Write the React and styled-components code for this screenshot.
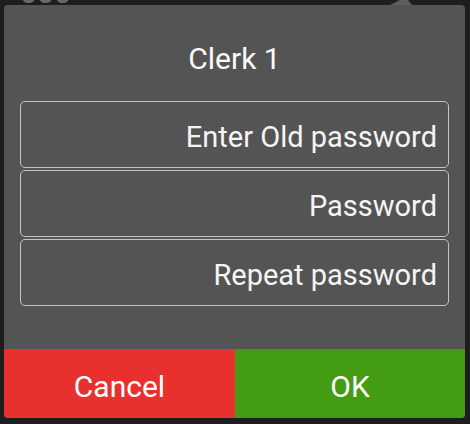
import React from "react";
import styled, { createGlobalStyle } from "styled-components";

const Global = createGlobalStyle`
  html, body { margin: 0; padding: 0; background: #1e1e1e; }
  body { font-family: Roboto, "Noto Sans", "Liberation Sans", sans-serif; }
  * { box-sizing: border-box; }
`;

const Screen = styled.div`
  position: relative;
  width: 470px;
  height: 424px;
  overflow: hidden;
  background: #1e1e1e;
`;

const Backdrop = styled.div`
  display: flex;
  align-items: flex-end;
  justify-content: space-between;
  height: 5px;
  padding: 0 56px 0 20px;
  overflow: hidden;
`;

const BackText = styled.span`
  font-size: 30px;
  line-height: 1;
  color: #6a6a6a;
  font-weight: 500;
  margin-bottom: -3px;
`;

const Dialog = styled.div`
  position: absolute;
  left: 4px;
  top: 5px;
  width: 461px;
  height: 413px;
  background: #555455;
  border-radius: 4px;
  overflow: hidden;
  display: flex;
  flex-direction: column;
`;

const Title = styled.h1`
  margin: 0;
  padding: 36px 0 0;
  height: 96px;
  text-align: center;
  font-size: 30px;
  font-weight: 400;
  color: #fafafa;
  line-height: 35px;
`;

const Fields = styled.div`
  display: flex;
  flex-direction: column;
  gap: 2px;
  padding: 0 16px;
`;

const Field = styled.div`
  height: 67px;
  border: 1.5px solid #c4c4c4;
  border-radius: 5px;
  display: flex;
  align-items: center;
  justify-content: flex-end;
  padding: 5px 11px 0 0;
  font-size: 29px;
  color: #f5f5f5;
  line-height: 35px;
`;

const Spacer = styled.div`
  flex: 1;
`;

const Actions = styled.div`
  display: grid;
  grid-template-columns: 231px 1fr;
  height: 69px;
`;

const ActionButton = styled.button`
  border: none;
  margin: 0;
  padding: 6px 0 0;
  background: ${(p) => p.$bg};
  color: #ffffff;
  font-family: inherit;
  font-size: 30px;
  line-height: 35px;
  display: flex;
  align-items: center;
  justify-content: center;
`;

export default function App() {
  return (
    <>
      <Global />
      <Screen>
        <Backdrop>
          <BackText>000</BackText>
          <svg width="24" height="5" viewBox="0 0 24 5">
            <path d="M10 0 H18 L22 5 H0 Z" fill="#5f5f5f" />
          </svg>
        </Backdrop>
        <Dialog>
          <Title>Clerk 1</Title>
          <Fields>
            <Field>Enter Old password</Field>
            <Field>Password</Field>
            <Field>Repeat password</Field>
          </Fields>
          <Spacer />
          <Actions>
            <ActionButton $bg="#e8312e">Cancel</ActionButton>
            <ActionButton $bg="#449c13">OK</ActionButton>
          </Actions>
        </Dialog>
      </Screen>
    </>
  );
}
